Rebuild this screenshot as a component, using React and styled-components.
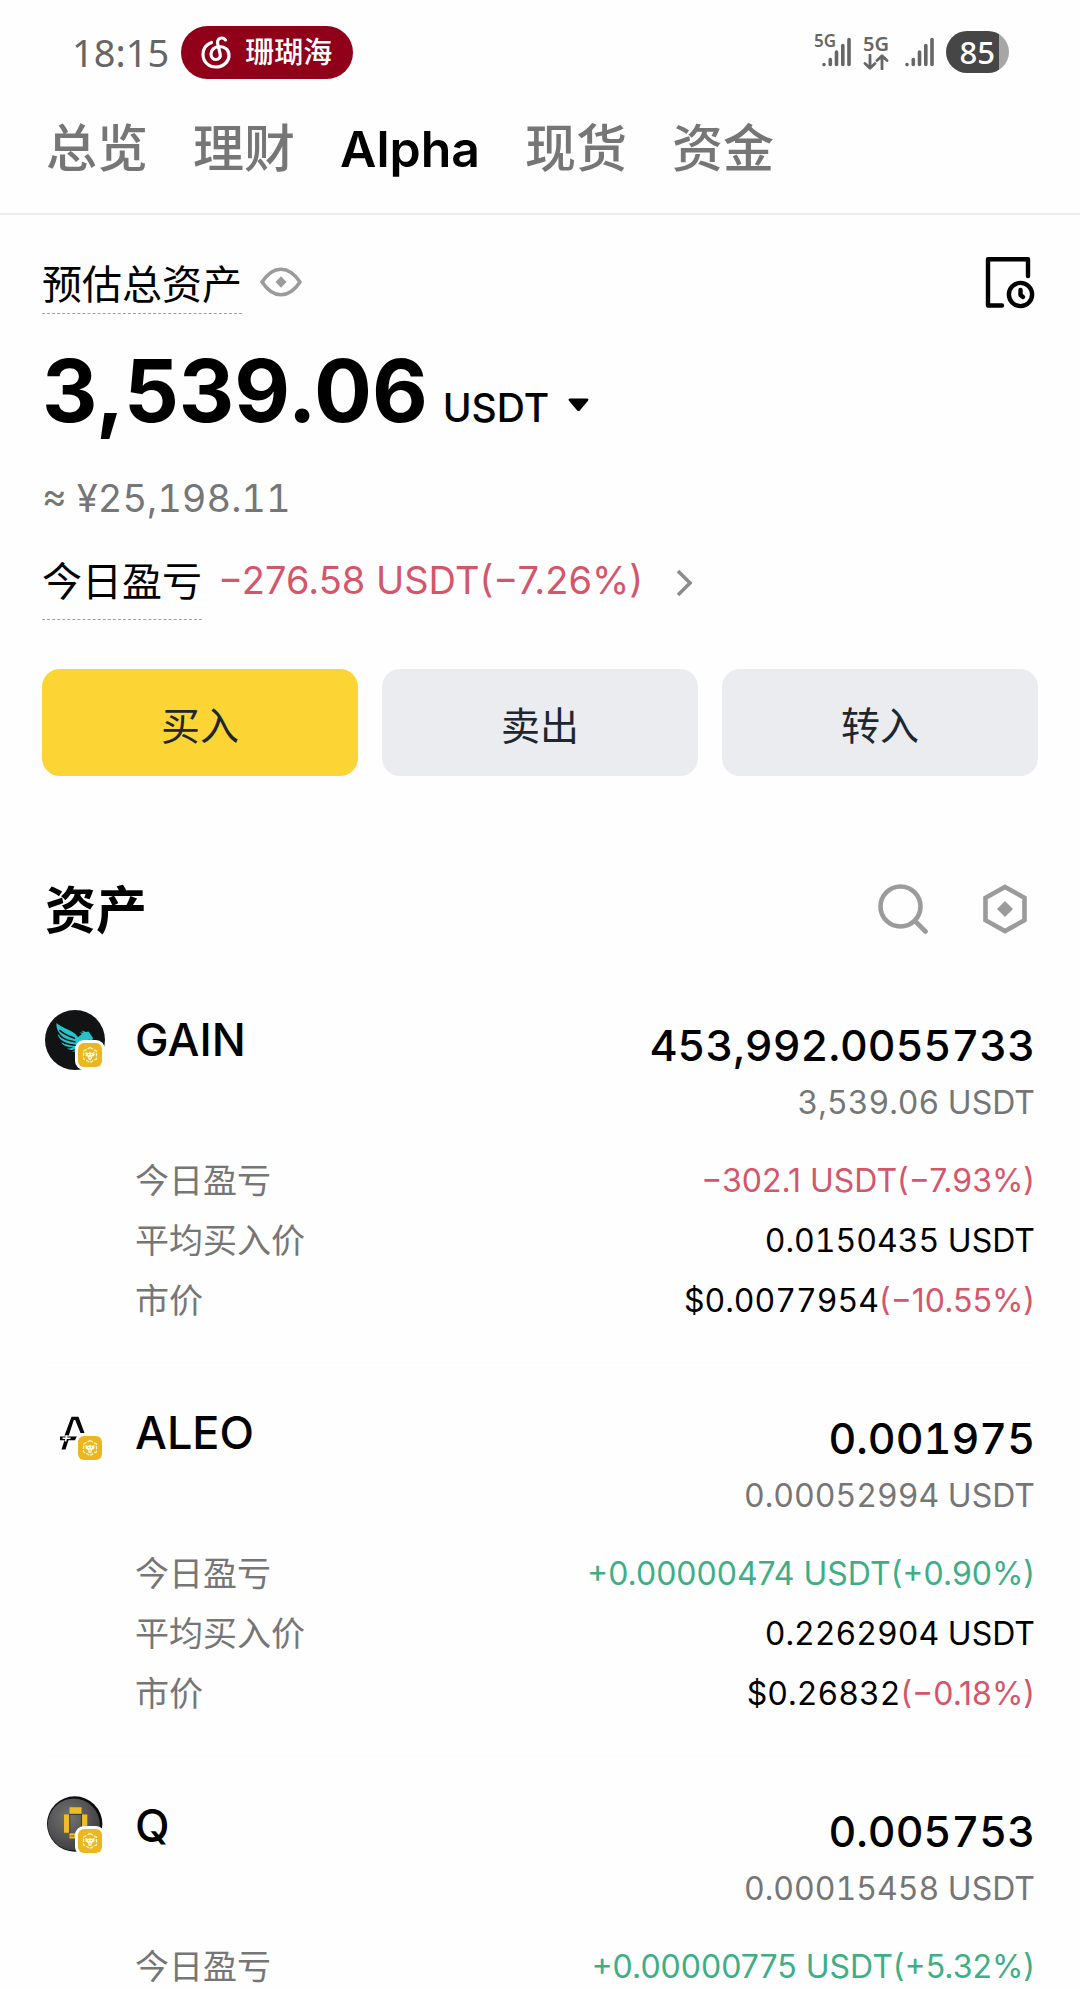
import React from "react";
import styled, { createGlobalStyle } from "styled-components";

const color = {
  ink: "#000000",
  muted: "#767676",
  icon: "#9b9b9b",
  status: "#666666",
  down: "#d4566b",
  up: "#3fae87",
  line: "#ececec",
  yellow: "#fcd535",
  grey: "#eaecef",
};

const tones = { ink: color.ink, muted: color.muted, down: color.down, up: color.up };

const GlobalStyle = createGlobalStyle`
  *, *::before, *::after { box-sizing: border-box; }
  body {
    margin: 0;
    background: #fefefe;
    color: ${color.ink};
    font-family: Inter, "Noto Sans CJK SC", sans-serif;
  }
  button {
    border: 0;
    padding: 0;
    background: none;
    color: inherit;
    font: inherit;
    cursor: pointer;
  }
  svg { display: block; }
  h2, p, ul, dl, dd { margin: 0; padding: 0; }
`;

const Screen = styled.div`
  height: 100vh;
  overflow: hidden;
`;

/* Status bar */

const StatusBar = styled.header`
  display: flex;
  align-items: center;
  justify-content: space-between;
  height: 104px;
  padding: 0 71px 0 72px;
  color: ${color.status};
  font-family: "Noto Sans", "Noto Sans CJK SC", sans-serif;
`;

const StatusGroup = styled.div`
  display: flex;
  align-items: center;
  gap: 12px;
`;

const Clock = styled.time`
  font-size: 38px;
  line-height: 52px;
`;

const MusicPill = styled.div`
  display: flex;
  align-items: center;
  gap: 14px;
  height: 53px;
  padding: 0 21px 0 20px;
  border-radius: 27px;
  background: #910019;
  color: #ffffff;
  font-size: 29px;
  font-weight: 500;
  line-height: 52px;
`;

const LabelledSignal = styled.div`
  position: relative;
  padding-left: 8px;
`;

const SignalTag = styled.span`
  position: absolute;
  left: 0;
  top: -6px;
  font-size: 17px;
  font-weight: 600;
  line-height: 20px;
`;

const DataTag = styled.div`
  width: 30px;
  font-size: 20px;
  font-weight: 600;
  line-height: 20px;
`;

const Battery = styled.div`
  width: 63px;
  height: 42px;
  padding-right: 14px;
  border-radius: 21px;
  background: linear-gradient(to right, #464646 84%, #a6a6a6 84%);
  color: #ffffff;
  font-size: 31px;
  font-weight: 500;
  line-height: 42px;
  text-align: right;
`;

/* Tabs */

const Tabs = styled.nav`
  display: flex;
  gap: 45px;
  padding: 10px 46px 29px;
  border-bottom: 2px solid ${color.line};
`;

const Tab = styled.a`
  color: ${(p) => (p.$active ? color.ink : color.muted)};
  font-size: ${(p) => (p.$active ? 50 : 51)}px;
  font-weight: ${(p) => (p.$active ? 600 : 500)};
  line-height: 70px;
  text-decoration: none;
`;

/* Balance */

const Balance = styled.section`
  padding: 42px 42px 0;
`;

const BalanceHead = styled.div`
  display: flex;
  align-items: flex-start;
  justify-content: space-between;
`;

const LabelGroup = styled.div`
  display: flex;
  align-items: flex-start;
  gap: 18px;
`;

const EyeButton = styled.button`
  display: grid;
  place-items: center;
  height: 50px;
`;

const DashedLabel = styled.span`
  padding-bottom: ${(p) => p.$drop || 0}px;
  border-bottom: 1px dashed #a0a0a0;
  font-size: 40px;
  line-height: ${(p) => p.$line}px;
`;

const TotalLine = styled.div`
  display: flex;
  align-items: baseline;
  gap: 15px;
  margin-top: 22px;
  line-height: 110px;
`;

const Total = styled.span`
  font-size: 86px;
  font-weight: 700;
`;

const Currency = styled.button`
  display: flex;
  align-items: center;
  gap: 19px;
  font-size: 39px;
  font-weight: 500;
  line-height: 50px;
`;

const Fiat = styled.p`
  margin-top: 22px;
  color: ${color.muted};
  font-size: 38px;
  font-variant-numeric: tabular-nums;
  line-height: 60px;
`;

const ProfitLine = styled.div`
  display: flex;
  align-items: flex-start;
  gap: 16px;
  margin-top: 22px;
`;

const ProfitLink = styled.a`
  display: flex;
  align-items: center;
  gap: 32px;
  color: ${color.down};
  font-size: 38px;
  line-height: 60px;
  text-decoration: none;
`;

const Actions = styled.div`
  display: grid;
  grid-template-columns: repeat(3, 1fr);
  gap: 24px;
  margin-top: 49px;
`;

const Action = styled.button`
  height: 107px;
  padding-top: 6px;
  border-radius: 18px;
  background: ${(p) => (p.$primary ? color.yellow : color.grey)};
  color: #202630;
  font-size: 39px;
  line-height: 60px;
`;

/* Assets */

const Assets = styled.section`
  padding: 93px 45px 0;
`;

const AssetsHead = styled.div`
  display: flex;
  align-items: center;
  justify-content: space-between;
  height: 80px;
  margin-bottom: 21px;
`;

const AssetsTitle = styled.h2`
  padding-top: 4px;
  font-size: 51px;
  font-weight: 600;
  line-height: 80px;
`;

const Tools = styled.div`
  display: flex;
  gap: 42px;
`;

const Tool = styled.button`
  display: grid;
  place-items: center;
  width: 60px;
  height: 60px;
`;

const AssetList = styled.ul`
  list-style: none;
`;

const AssetItem = styled.li`
  padding: 30px 0 31px;
  border-bottom: 1px solid #fbfbfb;
`;

const AssetTop = styled.div`
  display: flex;
  align-items: flex-start;
  justify-content: space-between;
`;

const Coin = styled.div`
  display: flex;
  align-items: center;
  gap: 30px;
  font-size: 45px;
  font-weight: 500;
  line-height: 80px;
`;

const Holding = styled.div`
  padding-top: 15px;
  font-variant-numeric: tabular-nums;
  text-align: right;
`;

const Amount = styled.p`
  font-size: 43px;
  font-weight: 500;
  line-height: 60px;
`;

const Worth = styled.p`
  color: ${color.muted};
  font-size: 32px;
  line-height: 56px;
`;

const Details = styled.dl`
  margin-top: 20px;
  padding-left: 90px;
`;

const Detail = styled.div`
  display: flex;
  justify-content: space-between;
  line-height: 60px;
`;

const DetailName = styled.dt`
  color: ${color.muted};
  font-size: 34px;
`;

const DetailValue = styled.dd`
  font-size: 32px;
  font-variant-numeric: tabular-nums;
`;

const Tone = styled.span`
  color: ${(p) => tones[p.$tone]};
  font-variant-numeric: normal;
`;

/* Drawings */

const MusicIcon = () => (
  <svg width="30" height="33" viewBox="0 0 30 33" fill="none" stroke="#fff" strokeWidth="3.2" strokeLinecap="round" aria-hidden="true">
    <path d="M10.5 6.5C5 8.500 2 13 2 18.500C2 26 8 31 15 31C22.500 31 28 25.500 28 19.500C28 13.500 23.500 10.500 18.500 10.500C13.500 10.500 10 14 10 18C10 21.500 12.500 23.500 15 23.500C18 23.500 19.800 21 19.200 18L16.600 7.500C16 4.200 18 2 20.800 2C22.500 2 23.600 2.800 24.500 3.900" />
  </svg>
);

const SignalBars = () => (
  <svg width="29" height="30" viewBox="0 0 29 30" fill="none" stroke={color.status} strokeWidth="3.600" strokeLinecap="round" aria-hidden="true">
    <path d="M2 27.500V27.600M8.300 22.500V27.500M14.500 15V27.500M20.800 8.500V27.500M27 2.500V27.500" />
  </svg>
);

const DataArrows = () => (
  <svg width="26" height="16" viewBox="0 0 26 16" fill="none" stroke={color.status} strokeWidth="2.800" strokeLinecap="round" strokeLinejoin="round" aria-hidden="true">
    <path d="M7 1V14M2 9.500L7 14.300L12 9.500M19 15V2M14 6.500L19 1.700L24 6.500" />
  </svg>
);

const EyeIcon = () => (
  <svg width="42" height="30" viewBox="0 0 42 30" aria-hidden="true">
    <path d="M2 15C8 6 13.500 2.200 21 2.200S34 6 40 15C34 24 28.500 27.800 21 27.800S8 24 2 15Z" fill="none" stroke={color.icon} strokeWidth="3.600" strokeLinejoin="round" />
    <path d="M21 9.200L26.500 15L21 20.800L15.500 15Z" fill={color.icon} />
  </svg>
);

const HistoryIcon = () => (
  <svg width="56" height="56" viewBox="0 0 56 56" fill="none" stroke="#000" strokeWidth="4.400" strokeLinecap="round" strokeLinejoin="round" aria-hidden="true">
    <path d="M20 48.500H6V2.200H46V19" />
    <circle cx="38.500" cy="37.500" r="11.600" />
    <path d="M38.500 33V38L41 40" />
  </svg>
);

const CaretIcon = () => (
  <svg width="21" height="20" viewBox="0 0 21 20" aria-hidden="true">
    <path d="M2 0.500H19C20.500 0.500 20.800 1.800 20 2.800L12 12.200C11 13.400 10 13.400 9 12.200L1 2.800C0.200 1.800 0.500 0.500 2 0.500Z" fill="#000" />
  </svg>
);

const ChevronIcon = () => (
  <svg width="18" height="36" viewBox="0 0 18 36" fill="none" stroke="#8c8c8c" strokeWidth="3.600" aria-hidden="true">
    <path d="M3 9L15 21L3 33" />
  </svg>
);

const SearchIcon = () => (
  <svg width="50" height="50" viewBox="0 0 50 50" fill="none" stroke={color.icon} strokeWidth="4.600" strokeLinecap="round" aria-hidden="true">
    <circle cx="22.500" cy="22.500" r="20" />
    <path d="M37 37L47.500 47.500" />
  </svg>
);

const HexIcon = () => (
  <svg width="44" height="50" viewBox="0 0 44 50" aria-hidden="true">
    <path d="M22 3L41.500 13.800V36.200L22 47L2.500 36.200V13.800Z" fill="none" stroke={color.icon} strokeWidth="4.600" />
    <path d="M22 17L30 25L22 33L14 25Z" fill={color.icon} />
  </svg>
);

const ChainBadge = () => (
  <g>
    <rect x="30" y="30" width="30" height="30" rx="9" fill="#fefefe" />
    <rect x="33" y="33" width="24" height="24" rx="6" fill="#eab71f" />
    <path d="M45 37.500L51.500 41.200V48.800L45 52.500L38.500 48.800V41.200Z" fill="none" stroke="#fff3c4" strokeWidth="1.300" strokeDasharray="3.500 1.200" />
    <path d="M40.500 41.800L43 43L45 42L47 43L49.500 41.800V45.500L47 47L46.300 50H43.700L43 47L40.500 45.500Z" fill="#fff8dc" />
    <path d="M43 44.500H44.200M45.800 44.500H47M45 46.500V48.500" stroke="#eab71f" strokeWidth="0.800" />
  </g>
);

const GainMark = () => (
  <g>
    <circle cx="30" cy="30" r="30" fill="#121314" />
    <path d="M11.500 13C17 18 24 19 29 23C31 24.500 32 26 33 27C35 26 35.500 25 37 24L34.500 22.500L38.500 22.800L36.500 20.500L41 22L43.500 21.500L46 25L48 28L47 31L44 29.500C42 33 38 38 33 41L27 42C29 41 30 40 30 39C27 40.500 24 40 22 38.500C25 38.500 27 38 28 37C23 37.500 18.500 36 16 32.500C18.500 33.500 21 34 23 33.500C17.500 31.500 13.500 28.500 12.500 24C14 25.500 16 26.500 18 27C13.500 23 11 18.500 11.500 13Z" fill="#27c3cb" />
    <path d="M14.500 20C19 25 24 26 30 28.500M15 26C20 30 25 31 30.500 32M19 33C24 34.500 27 35 31 35.500" fill="none" stroke="#121314" strokeWidth="1.500" />
  </g>
);

const AleoMark = () => (
  <g>
    <path d="M19.500 32.500L26.500 13.700H33.500L39.500 30H35.500L30.200 17H28.800L23.800 32.500Z" fill="#050505" />
    <path d="M15 33.500H32L30.500 37.200H23.500L20.500 46.500H16.500L19.500 37.200H15Z" fill="#050505" />
    <path d="M17.500 35.300H25.500M21.800 32.500L20.400 38.500" stroke="#fefefe" strokeWidth="1.600" />
  </g>
);

const QMark = () => (
  <g>
    <defs>
      <radialGradient id="q-disc" cx="0.400" cy="0.350" r="0.700">
        <stop offset="0" stopColor="#737373" />
        <stop offset="1" stopColor="#3c3c3c" />
      </radialGradient>
    </defs>
    <circle cx="29.700" cy="28" r="27.700" fill="#0b0b0b" />
    <circle cx="28.800" cy="28.600" r="26" fill="url(#q-disc)" />
    <path d="M24.500 11.300H36.500V18H24.500ZM19 18.500H24.500V36.700H19ZM36.700 18.500H42.300V36.700H36.700ZM24.500 37.200H30V42.500H24.500Z" fill="#eebd25" />
    <path d="M24.500 18.300H36.700M24.700 18V37M36.500 18V37" stroke="#2b2820" strokeWidth="0.800" />
    <path d="M25.500 40H29" stroke="#6b5618" strokeWidth="1" />
  </g>
);

const marks = { GAIN: GainMark, ALEO: AleoMark, Q: QMark };

const CoinLogo = ({ symbol }) => {
  const Mark = marks[symbol];
  return (
    <svg width="60" height="60" viewBox="0 0 60 60" aria-hidden="true">
      <Mark />
      <ChainBadge />
    </svg>
  );
};

/* Data */

const tabs = ["总览", "理财", "Alpha", "现货", "资金"];
const actions = ["买入", "卖出", "转入"];

const assets = [
  {
    symbol: "GAIN",
    amount: "453,992.0055733",
    worth: "3,539.06 USDT",
    profit: ["−302.1 USDT(−7.93%)", "down"],
    average: "0.0150435 USDT",
    price: "$0.0077954",
    change: ["(−10.55%)", "down"],
  },
  {
    symbol: "ALEO",
    amount: "0.001975",
    worth: "0.00052994 USDT",
    profit: ["+0.00000474 USDT(+0.90%)", "up"],
    average: "0.2262904 USDT",
    price: "$0.26832",
    change: ["(−0.18%)", "down"],
  },
  {
    symbol: "Q",
    amount: "0.005753",
    worth: "0.00015458 USDT",
    profit: ["+0.00000775 USDT(+5.32%)", "up"],
  },
];

const AssetRow = ({ asset }) => (
  <AssetItem>
    <AssetTop>
      <Coin>
        <CoinLogo symbol={asset.symbol} />
        {asset.symbol}
      </Coin>
      <Holding>
        <Amount>{asset.amount}</Amount>
        <Worth>{asset.worth}</Worth>
      </Holding>
    </AssetTop>
    <Details>
      <Detail>
        <DetailName>今日盈亏</DetailName>
        <DetailValue>
          <Tone $tone={asset.profit[1]}>{asset.profit[0]}</Tone>
        </DetailValue>
      </Detail>
      {asset.average && (
        <Detail>
          <DetailName>平均买入价</DetailName>
          <DetailValue>{asset.average}</DetailValue>
        </Detail>
      )}
      {asset.price && (
        <Detail>
          <DetailName>市价</DetailName>
          <DetailValue>
            {asset.price}
            <Tone $tone={asset.change[1]}>{asset.change[0]}</Tone>
          </DetailValue>
        </Detail>
      )}
    </Details>
  </AssetItem>
);

export default function App() {
  return (
    <Screen>
      <GlobalStyle />
      <StatusBar>
        <StatusGroup>
          <Clock>18:15</Clock>
          <MusicPill>
            <MusicIcon />
            珊瑚海
          </MusicPill>
        </StatusGroup>
        <StatusGroup>
          <LabelledSignal>
            <SignalTag>5G</SignalTag>
            <SignalBars />
          </LabelledSignal>
          <DataTag>
            5G
            <DataArrows />
          </DataTag>
          <SignalBars />
          <Battery>85</Battery>
        </StatusGroup>
      </StatusBar>

      <Tabs>
        {tabs.map((name) => (
          <Tab key={name} href="#" $active={name === "Alpha"}>
            {name}
          </Tab>
        ))}
      </Tabs>

      <main>
        <Balance>
          <BalanceHead>
            <LabelGroup>
              <DashedLabel $line={56}>预估总资产</DashedLabel>
              <EyeButton type="button" aria-label="隐藏资产">
                <EyeIcon />
              </EyeButton>
            </LabelGroup>
            <button type="button" aria-label="历史记录">
              <HistoryIcon />
            </button>
          </BalanceHead>
          <TotalLine>
            <Total>3,539.06</Total>
            <Currency type="button">
              USDT
              <CaretIcon />
            </Currency>
          </TotalLine>
          <Fiat>≈ ¥25,198.11</Fiat>
          <ProfitLine>
            <DashedLabel $line={64} $drop={5}>今日盈亏</DashedLabel>
            <ProfitLink href="#">
              −276.58 USDT(−7.26%)
              <ChevronIcon />
            </ProfitLink>
          </ProfitLine>
          <Actions>
            {actions.map((name, index) => (
              <Action key={name} type="button" $primary={index === 0}>
                {name}
              </Action>
            ))}
          </Actions>
        </Balance>

        <Assets>
          <AssetsHead>
            <AssetsTitle>资产</AssetsTitle>
            <Tools>
              <Tool type="button" aria-label="搜索">
                <SearchIcon />
              </Tool>
              <Tool type="button" aria-label="设置">
                <HexIcon />
              </Tool>
            </Tools>
          </AssetsHead>
          <AssetList>
            {assets.map((asset) => (
              <AssetRow key={asset.symbol} asset={asset} />
            ))}
          </AssetList>
        </Assets>
      </main>
    </Screen>
  );
}
